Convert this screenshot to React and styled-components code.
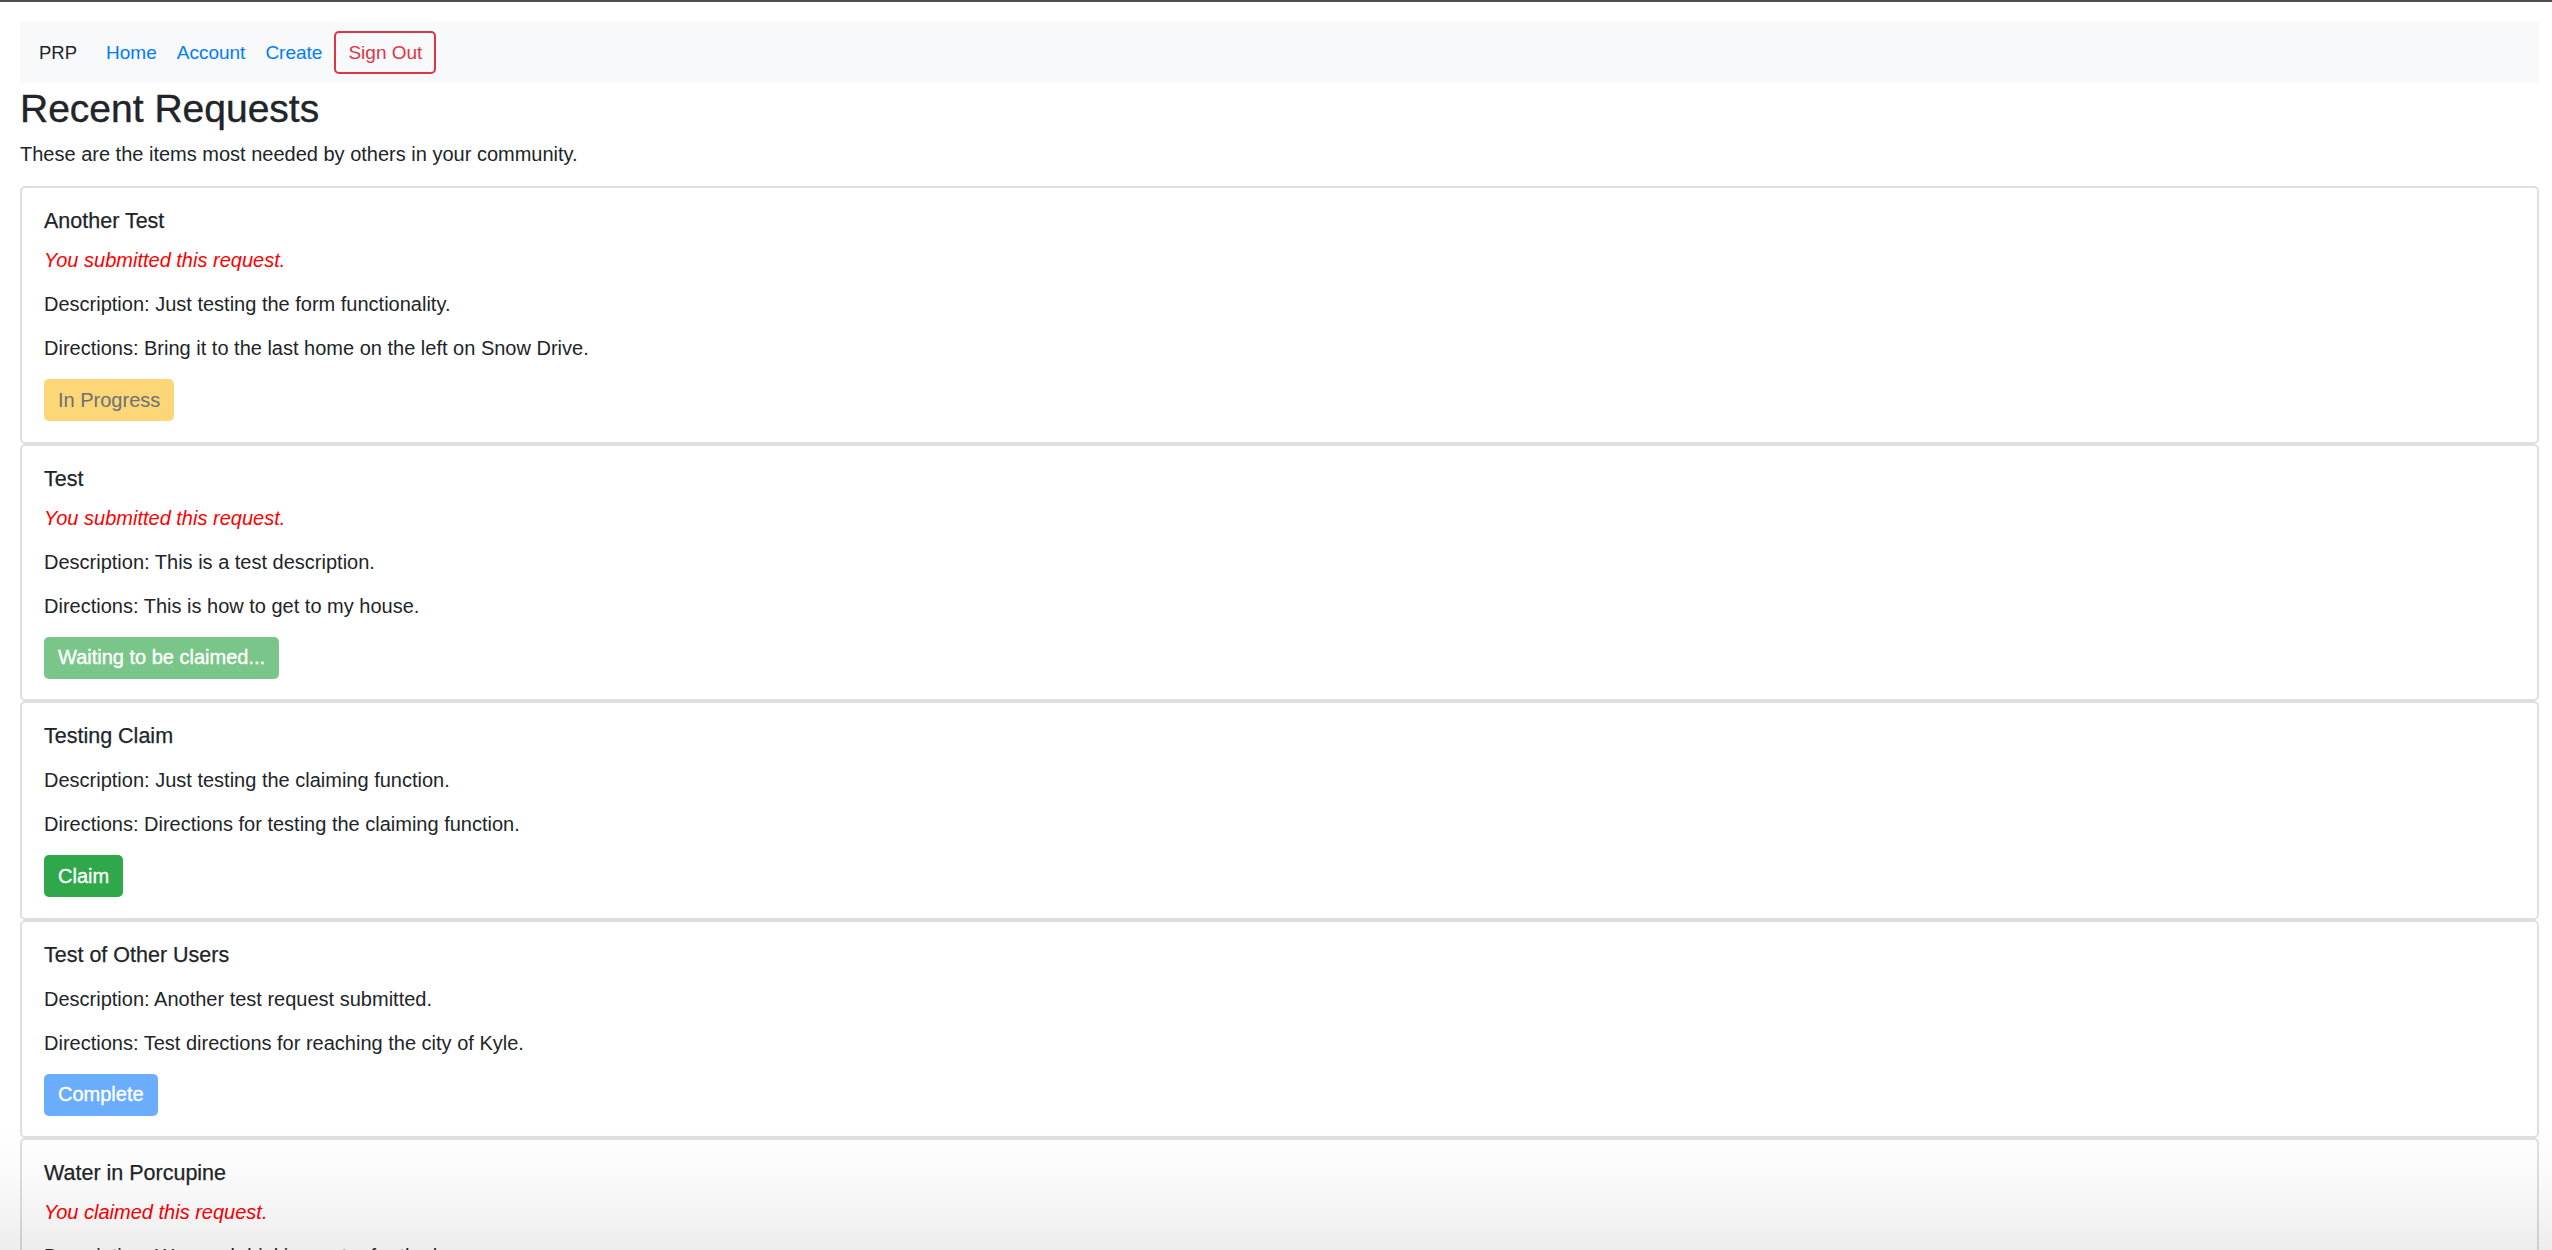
import React from "react"
import styled, { createGlobalStyle } from "styled-components"

const requests = [
  {
    id: 1,
    title: "Another Test",
    notice: "You submitted this request.",
    description: "Just testing the form functionality.",
    directions: "Bring it to the last home on the left on Snow Drive.",
    status: "progress",
  },
  {
    id: 2,
    title: "Test",
    notice: "You submitted this request.",
    description: "This is a test description.",
    directions: "This is how to get to my house.",
    status: "waiting",
  },
  {
    id: 3,
    title: "Testing Claim",
    description: "Just testing the claiming function.",
    directions: "Directions for testing the claiming function.",
    status: "claim",
  },
  {
    id: 4,
    title: "Test of Other Users",
    description: "Another test request submitted.",
    directions: "Test directions for reaching the city of Kyle.",
    status: "complete",
  },
  {
    id: 5,
    title: "Water in Porcupine",
    notice: "You claimed this request.",
    description: "We need drinking water for the house.",
    directions: "Take the main road into Porcupine.",
    status: "complete",
  },
]

const statusButtons = {
  progress: { label: "In Progress", bg: "#fdd677", color: "#6e7174", heavy: false },
  waiting: { label: "Waiting to be claimed...", bg: "#7ac68a", color: "#ffffff", heavy: true },
  claim: { label: "Claim", bg: "#2ea84a", color: "#ffffff", heavy: true },
  complete: { label: "Complete", bg: "#6aadfd", color: "#ffffff", heavy: true },
}

export default function App() {
  return (
    <>
      <GlobalStyle />
      <Page>
        <NavBar>
          <Brand>PRP</Brand>
          <NavLink>Home</NavLink>
          <NavLink>Account</NavLink>
          <NavLink>Create</NavLink>
          <SignOut>Sign Out</SignOut>
        </NavBar>
        <Title>Recent Requests</Title>
        <Lead>These are the items most needed by others in your community.</Lead>
        <List>
          {requests.map((r) => {
            const btn = statusButtons[r.status]
            return (
              <Card key={r.id}>
                <CardTitle>{r.title}</CardTitle>
                {r.notice && <Notice>{r.notice}</Notice>}
                <Text>Description: {r.description}</Text>
                <Text>Directions: {r.directions}</Text>
                <StatusButton bg={btn.bg} fg={btn.color} heavy={btn.heavy}>{btn.label}</StatusButton>
              </Card>
            )
          })}
        </List>
      </Page>
      <BottomShade />
    </>
  )
}

const GlobalStyle = createGlobalStyle`
  * { box-sizing: border-box; }
  body {
    margin: 0;
    background: #ffffff;
    color: #212529;
    font-family: "Liberation Sans", Arial, sans-serif;
    font-size: 20px;
    line-height: 27px;
    overflow: hidden;
  }
`

const Page = styled.div`
  border-top: 2px solid #4d4d4d;
  padding: 0 13px 0 20px;
  min-height: 1250px;
`

const NavBar = styled.nav`
  margin-top: 20px;
  height: 61px;
  background: #f8f9fa;
  display: flex;
  align-items: center;
  padding: 0 19px;
`

const Brand = styled.span`
  font-size: 18.5px;
  color: #212529;
  margin-right: 19px;
`

const NavLink = styled.a`
  font-size: 19px;
  color: #007bff;
  padding: 0 10px;
  cursor: pointer;
`

const SignOut = styled.button`
  font-family: inherit;
  font-size: 19px;
  line-height: 27px;
  color: #dc3545;
  background: transparent;
  border: 2px solid #dc3545;
  border-radius: 5px;
  padding: 6px 12px;
  margin-left: 2px;
`

const Title = styled.h1`
  font-size: 39px;
  line-height: 47px;
  font-weight: 400;
  -webkit-text-stroke: 0.4px #212529;
  margin: 2px 0 8px;
  color: #212529;
`

const Lead = styled.p`
  margin: 0 0 17px;
  line-height: 29px;
`

const List = styled.div`
  display: flex;
  flex-direction: column;
`

const Card = styled.div`
  border: 2px solid #dfdfdf;
  border-radius: 5px;
  padding: 21px 22px 20.5px;
  background: #ffffff;
`

const CardTitle = styled.h5`
  font-size: 21.5px;
  line-height: 24px;
  font-weight: 400;
  -webkit-text-stroke: 0.25px #212529;
  margin: 0 0 19px;
  color: #212529;
`

const Notice = styled.p`
  color: #ff0000;
  font-style: italic;
  margin: -5px 0 17px;
`

const Text = styled.p`
  margin: 0 0 17px;
`

const StatusButton = styled.button`
  font-family: inherit;
  font-size: 20px;
  line-height: 27px;
  padding: 7.5px 14px;
  border: none;
  border-radius: 5px;
  background: ${(p) => p.bg};
  color: ${(p) => p.fg};
  -webkit-text-stroke: ${(p) => (p.heavy ? "0.35px #ffffff" : "0")};
`

const BottomShade = styled.div`
  position: fixed;
  left: 0;
  right: 0;
  bottom: 0;
  height: 130px;
  pointer-events: none;
  background: linear-gradient(to bottom, rgba(0, 0, 0, 0) 0%, rgba(0, 0, 0, 0.015) 40%, rgba(0, 0, 0, 0.07) 100%);
`
